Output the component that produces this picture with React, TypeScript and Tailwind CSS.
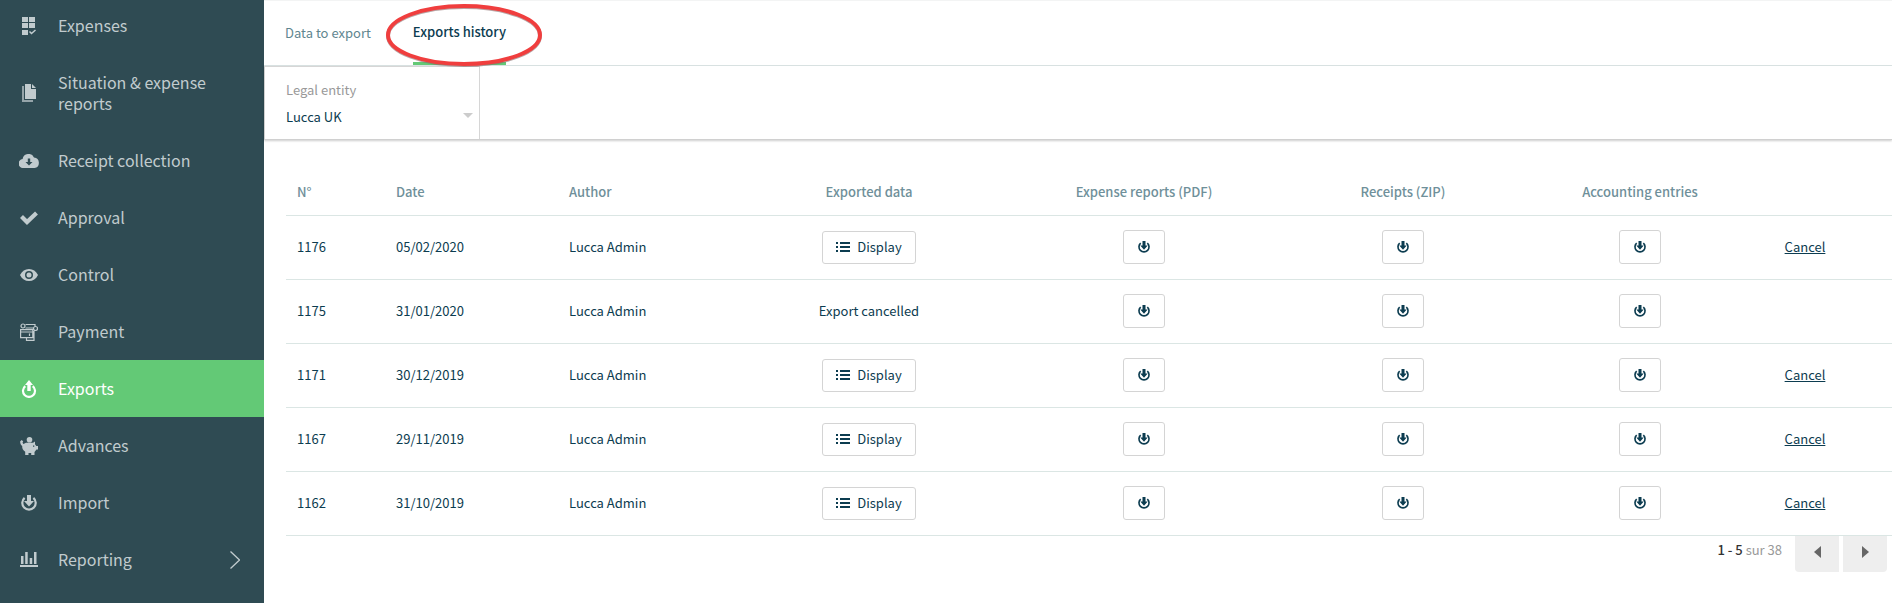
import type { ReactNode } from 'react';

type NavItem = {
  label: string;
  icon: ReactNode;
  active?: boolean;
  hasChildren?: boolean;
};

type ExportRow = {
  id: string;
  date: string;
  author: string;
  cancelled?: boolean;
};

function GridCheckIcon() {
  return (
    <svg viewBox="0 0 18 18" className="size-[18px]" fill="currentColor" aria-hidden="true">
      <path d="M2 0h6v5H2zM9 0h6v5H9zM2 6h6v5H2zM9 6h6v5H9zM2 13h6v5H2z" />
      <path d="M9.500 14.500l2 2 4-3.500" fill="none" stroke="currentColor" strokeWidth="1.500" />
    </svg>
  );
}

function DocumentsIcon() {
  return (
    <svg viewBox="0 0 18 18" className="size-[18px]" fill="currentColor" aria-hidden="true">
      <path d="M5 0h6v5h5v10H5z" />
      <path d="M12 0l4 4h-4z" />
      <path d="M2 2h2v14h9v2H2z" opacity="0.7" />
    </svg>
  );
}

function CloudIcon() {
  return (
    <svg viewBox="0 0 20 14" className="h-[14px] w-5" fill="currentColor" aria-hidden="true">
      <path
        fillRule="evenodd"
        d="M4.500 14A4.500 4.500 0 0 1 3.600 5 6 6 0 0 1 15 3.500 5.300 5.300 0 0 1 15.500 14zM8.800 4.500v3.500H6.500L10 11.500 13.500 8h-2.300V4.500z"
      />
    </svg>
  );
}

function CheckIcon() {
  return (
    <svg viewBox="0 0 18 14" className="h-[14px] w-[18px]" aria-hidden="true">
      <path d="M1.500 5.500L7 11 16.500 2" fill="none" stroke="currentColor" strokeWidth="4.200" />
    </svg>
  );
}

function EyeIcon() {
  return (
    <svg viewBox="0 0 18 12" className="h-3 w-[18px]" aria-hidden="true">
      <path
        fill="currentColor"
        fillRule="evenodd"
        d="M0 6C2 2 5 0 9 0s7 2 9 6c-2 4-5 6-9 6S2 10 0 6zm9-4a4 4 0 1 0 0 8 4 4 0 0 0 0-8z"
      />
      <circle cx="9" cy="6" r="2.500" fill="currentColor" />
    </svg>
  );
}

function PaymentIcon() {
  return (
    <svg viewBox="0 0 18 18" className="size-[18px]" fill="none" stroke="currentColor" strokeWidth="1.200" aria-hidden="true">
      <circle cx="3" cy="3" r="2" />
      <path d="M5.500 1.500H15v2M5.500 5H13" />
      <circle cx="15.500" cy="5.500" r="2" />
      <path d="M.6 6.600h12.200v8H.6zM.6 9h12.200M9.500 10.500v2.500M6.500 15v2.300H14V8" />
    </svg>
  );
}

function ExportIcon() {
  return (
    <svg viewBox="0 0 16 18" className="h-[18px] w-4" aria-hidden="true">
      <path d="M4.300 6.200a6 6 0 1 0 7.400 0" fill="none" stroke="currentColor" strokeWidth="2.200" />
      <path d="M8 0l4 5H9.700v6H6.300V5H4z" fill="currentColor" />
    </svg>
  );
}

function PiggyIcon() {
  return (
    <svg viewBox="0 0 18 18" className="size-[18px]" fill="currentColor" aria-hidden="true">
      <circle cx="9.500" cy="2.800" r="2.800" />
      <path
        fillRule="evenodd"
        d="M6 5.800h7l2-1.300v2.800l1.300 1.700H18v3.500h-1.500L14.500 15v3h-3.300v-2H8.500v2H5.200v-3.200C3 13.300 2 11.500 2.200 9 1 8 0 6.500.2 4.200L1.800 3l1.400 1.500-.7 1.300 1 1.200zM13 8.500v1.300h1.300V8.500z"
      />
    </svg>
  );
}

function ImportIcon({ className }: { className: string }) {
  return (
    <svg viewBox="0 0 16 16" className={className} aria-hidden="true">
      <path d="M3.600 2.800a6.700 6.700 0 1 0 8.800 0" fill="none" stroke="currentColor" strokeWidth="2.200" />
      <path d="M6 0h4v6h3l-5 5.500L3 6h3z" fill="currentColor" />
    </svg>
  );
}

function ReportIcon() {
  return (
    <svg viewBox="0 0 18 15" className="h-[15px] w-[18px]" fill="currentColor" aria-hidden="true">
      <path d="M1 4h2.500v8H1zM5.200 0h2.500v12H5.200zM9.700 6h2.500v6H9.700zM14 0h2.500v12H14zM0 13h18v2H0z" />
    </svg>
  );
}

function ListIcon() {
  return (
    <svg viewBox="0 0 14 10" className="h-[10px] w-[14px]" fill="currentColor" aria-hidden="true">
      <path d="M0 0h2v2H0zM4 0h10v2H4zM0 4h2v2H0zM4 4h10v2H4zM0 8h2v2H0zM4 8h10v2H4z" />
    </svg>
  );
}

const navItems: NavItem[] = [
  { label: 'Expenses', icon: <GridCheckIcon /> },
  { label: 'Situation & expense reports', icon: <DocumentsIcon /> },
  { label: 'Receipt collection', icon: <CloudIcon /> },
  { label: 'Approval', icon: <CheckIcon /> },
  { label: 'Control', icon: <EyeIcon /> },
  { label: 'Payment', icon: <PaymentIcon /> },
  { label: 'Exports', icon: <ExportIcon />, active: true },
  { label: 'Advances', icon: <PiggyIcon /> },
  { label: 'Import', icon: <ImportIcon className="size-4" /> },
  { label: 'Reporting', icon: <ReportIcon />, hasChildren: true },
];

const rows: ExportRow[] = [
  { id: '1176', date: '05/02/2020', author: 'Lucca Admin' },
  { id: '1175', date: '31/01/2020', author: 'Lucca Admin', cancelled: true },
  { id: '1171', date: '30/12/2019', author: 'Lucca Admin' },
  { id: '1167', date: '29/11/2019', author: 'Lucca Admin' },
  { id: '1162', date: '31/10/2019', author: 'Lucca Admin' },
];

function Sidebar() {
  return (
    <nav className="w-[264px] shrink-0 bg-[#2f4b53] text-base leading-[21px] text-[#c1cbce]">
      <ul>
        {navItems.map((item) => (
          <li key={item.label} className="group">
            <a
              href="#"
              className={`flex items-center gap-[18px] py-[18px] pr-6 pl-[18px] group-first:pt-[15px] ${
                item.active ? 'bg-[#63c976] text-white' : ''
              }`}
            >
              <span className="flex w-[22px] shrink-0 justify-center">{item.icon}</span>
              <span className="max-w-40 grow">{item.label}</span>
              {item.hasChildren && (
                <svg
                  viewBox="0 0 10 18"
                  className="ml-auto h-[18px] w-[10px]"
                  fill="none"
                  stroke="currentColor"
                  strokeWidth="1.300"
                  aria-hidden="true"
                >
                  <path d="M.5.5L9.500 9l-9 8.500" />
                </svg>
              )}
            </a>
          </li>
        ))}
      </ul>
    </nav>
  );
}

function Tabs() {
  return (
    <div className="flex h-[66px] gap-[42px] border-t border-b border-t-[#f3f4f4] border-b-[#dbe4e4] px-[21px] text-[13px]">
      <a href="#" className="flex items-center pb-px text-[#5f8690]">
        Data to export
      </a>
      <a href="#" className="relative flex items-center border-b-[3px] border-[#63c976] pt-px font-medium text-[#0c3c50]">
        Exports history
        {/* Highlight drawn around the current tab */}
        <svg
          viewBox="0 0 158 64"
          className="pointer-events-none absolute top-[2px] -left-7 z-10 h-16 w-[158px] max-w-none"
          fill="none"
          aria-hidden="true"
        >
          <ellipse cx="79" cy="33" rx="76" ry="29" stroke="#8a6a6a" strokeWidth="4" opacity="0.6" />
          <ellipse cx="79" cy="32" rx="76" ry="29" stroke="#f03e3e" strokeWidth="4" />
        </svg>
      </a>
    </div>
  );
}

function Filters() {
  return (
    <div className="flex border-b border-l border-[#d0d0d0] shadow-[0_1px_2px_rgba(0,0,0,0.2)]">
      <div className="relative w-[215px] border-t border-r border-[#d6d6d6] pt-[11px] pb-2">
        <label htmlFor="legal-entity" className="mb-px block px-[21px] text-[13px] leading-6 text-[#999999]">
          Legal entity
        </label>
        <select
          id="legal-entity"
          className="block w-full appearance-none bg-transparent px-[21px] text-[13px] leading-7 text-[#0c3c50]"
        >
          <option>Lucca UK</option>
        </select>
        <span className="pointer-events-none absolute right-[6px] bottom-[21px] border-x-[5px] border-t-[5px] border-x-transparent border-t-[#cccccc]" />
      </div>
    </div>
  );
}

function DownloadButton({ label }: { label: string }) {
  return (
    <button
      type="button"
      aria-label={label}
      className="inline-flex h-[34px] w-[42px] items-center justify-center rounded-[3px] border border-[#d4d4d4] bg-white align-middle"
    >
      <ImportIcon className="size-3" />
    </button>
  );
}

function ExportsTable() {
  return (
    <table className="w-full table-fixed text-[13px] leading-5 text-[#0c3c50]">
      <colgroup>
        <col className="w-[99px]" />
        <col className="w-[173px]" />
        <col className="w-[136px]" />
        <col className="w-[350px]" />
        <col className="w-[200px]" />
        <col className="w-[318px]" />
        <col className="w-[156px]" />
        <col className="w-[174px]" />
      </colgroup>
      <thead className="text-[#6f909a]">
        <tr className="h-[45px] border-b border-[#dbe6e4] *:font-medium">
          <th className="pl-[11px] text-left">N°</th>
          <th className="pl-[11px] text-left">Date</th>
          <th className="pl-[11px] text-left">Author</th>
          <th>Exported data</th>
          <th>Expense reports (PDF)</th>
          <th>Receipts (ZIP)</th>
          <th>Accounting entries</th>
          <td />
        </tr>
      </thead>
      <tbody>
        {rows.map((row) => (
          <tr key={row.id} className="h-16 border-b border-[#dbe6e4] text-center">
            <td className="pl-[11px] text-left">{row.id}</td>
            <td className="pl-[11px] text-left">{row.date}</td>
            <td className="pl-[11px] text-left">{row.author}</td>
            <td>
              {row.cancelled ? (
                'Export cancelled'
              ) : (
                <button
                  type="button"
                  className="inline-flex h-[33px] items-center gap-[7px] rounded-[3px] border border-[#d4d4d4] bg-white px-[13px] align-middle"
                >
                  <ListIcon />
                  Display
                </button>
              )}
            </td>
            <td>
              <DownloadButton label="Download expense reports" />
            </td>
            <td>
              <DownloadButton label="Download receipts" />
            </td>
            <td>
              <DownloadButton label="Download accounting entries" />
            </td>
            <td>
              {!row.cancelled && (
                <a href="#" className="underline">
                  Cancel
                </a>
              )}
            </td>
          </tr>
        ))}
      </tbody>
    </table>
  );
}

function Pager() {
  return (
    <div className="flex justify-end gap-1 pr-[5px] text-[13px]">
      <p className="mr-[9px] leading-7 text-[#999999]">
        <span className="font-medium text-[#333333]">1 - 5</span> sur 38
      </p>
      <button type="button" aria-label="Previous page" className="flex h-9 w-11 items-center justify-center rounded-bl bg-[#eeeeee] pb-[3px]">
        <span className="border-y-[6px] border-r-[7px] border-y-transparent border-r-[#666666]" />
      </button>
      <button type="button" aria-label="Next page" className="flex h-9 w-11 items-center justify-center rounded-br bg-[#eeeeee] pb-[3px]">
        <span className="border-y-[6px] border-l-[7px] border-y-transparent border-l-[#666666]" />
      </button>
    </div>
  );
}

function App() {
  return (
    <div className="flex min-h-screen bg-white font-['Noto_Sans_CJK_SC',sans-serif]">
      <Sidebar />
      <main className="min-w-0 grow">
        <Tabs />
        <Filters />
        <section className="pt-[30px] pl-[22px]">
          <ExportsTable />
          <Pager />
        </section>
      </main>
    </div>
  );
}

export default App;
